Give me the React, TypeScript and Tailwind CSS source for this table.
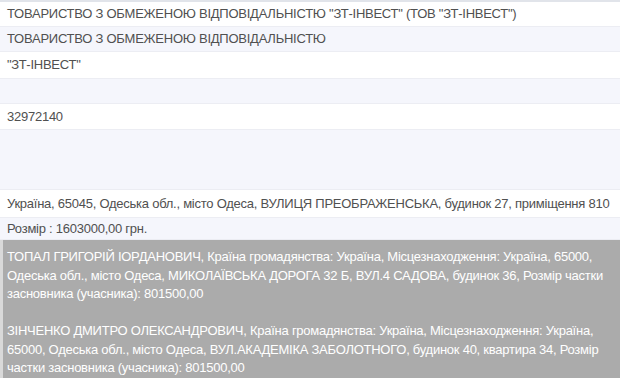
import React from "react";

const rows: { text: string; bg: string; h: string }[] = [
    { text: 'ТОВАРИСТВО З ОБМЕЖЕНОЮ ВІДПОВІДАЛЬНІСТЮ "ЗТ-ІНВЕСТ" (ТОВ "ЗТ-ІНВЕСТ")', bg: "bg-white", h: "h-[25px]" },
    { text: "ТОВАРИСТВО З ОБМЕЖЕНОЮ ВІДПОВІДАЛЬНІСТЮ", bg: "bg-[#f5f6fc]", h: "h-[25px]" },
    { text: '"ЗТ-ІНВЕСТ"', bg: "bg-white", h: "h-[27px]" },
    { text: "", bg: "bg-[#f5f6fc]", h: "h-[25px]" },
    { text: "32972140", bg: "bg-white", h: "h-[26px]" },
    { text: "", bg: "bg-[#f5f6fc]", h: "h-[60px]" },
    { text: "Україна, 65045, Одеська обл., місто Одеса, ВУЛИЦЯ ПРЕОБРАЖЕНСЬКА, будинок 27, приміщення 810", bg: "bg-white", h: "h-[28px]" },
    { text: "Розмір : 1603000,00 грн.", bg: "bg-[#f5f6fc]", h: "h-[22px]" },
];

const founders = [
    "ТОПАЛ ГРИГОРІЙ ІОРДАНОВИЧ, Країна громадянства: Україна, Місцезнаходження: Україна, 65000, Одеська обл., місто Одеса, МИКОЛАЇВСЬКА ДОРОГА 32 Б, ВУЛ.4 САДОВА, будинок 36, Розмір частки засновника (учасника): 801500,00",
    "ЗІНЧЕНКО ДМИТРО ОЛЕКСАНДРОВИЧ, Країна громадянства: Україна, Місцезнаходження: Україна, 65000, Одеська обл., місто Одеса, ВУЛ.АКАДЕМІКА ЗАБОЛОТНОГО, будинок 40, квартира 34, Розмір частки засновника (учасника): 801500,00",
];

export default function App() {
    return (
        <div className="w-[620px] h-[380px] overflow-hidden bg-white font-['Liberation_Sans',Arial,sans-serif] text-[13px] tracking-[-0.25px] text-[#505050]">
            <div className="h-[2px] bg-[#e1e4ea]" />
            {rows.map((row, i) => (
                <div key={i} className={`${row.bg} ${row.h} flex items-center px-[7px] border-b border-[#ecedf3] whitespace-nowrap`}>
                    {row.text}
                </div>
            ))}
            <div className="bg-[#ababab] border-l-[3px] border-[#d9d9d9] pl-[4px] pr-[4px] pt-[8px] leading-[18.5px] text-white">
                {founders.map((f, i) => (
                    <React.Fragment key={i}>
                        {i > 0 && <><br /><br /></>}
                        {f}
                    </React.Fragment>
                ))}
            </div>
        </div>
    );
}
